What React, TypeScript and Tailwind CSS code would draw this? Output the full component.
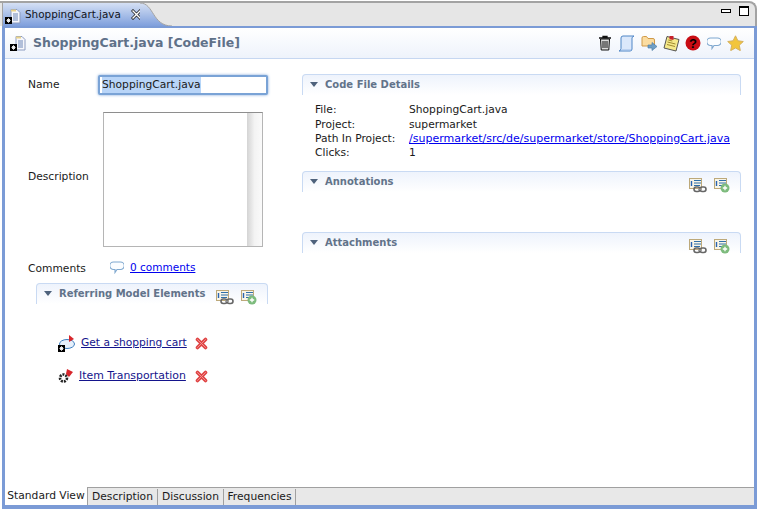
import type { ReactNode } from "react";

const font = { fontFamily: '"DejaVu Sans", sans-serif' };

function FileIcon() {
  return (
    <svg width="17" height="17" viewBox="0 0 17 17">
      <path d="M6 1.500h6l3 3v10.500h-9z" fill="#f7f7fb" stroke="#8c9cc0" />
      <path d="M8 6h5M8 8h5M8 10h5M8 12h5" stroke="#6d87b8" />
      <path d="M6 1.500h5v2h-5z" fill="#e9d28a" />
      <rect x="0" y="9" width="7" height="7" fill="#000" />
      <path d="M3.500 10.200v4.600M1.500 12.500h4M2 11l3 3M5 11l-3 3" stroke="#fff" strokeWidth="0.900" />
    </svg>
  );
}

function LinkListIcon() {
  return (
    <svg width="18" height="15" viewBox="0 0 18 15">
      <rect x="0.500" y="0.500" width="12" height="10" fill="#f8f5e8" stroke="#bda97a" />
      <path d="M2.500 3v5" stroke="#2a63b0" strokeWidth="1.400" />
      <path d="M5 2.500h7M5 5h7M5 7.500h6" stroke="#2f6fa8" />
      <rect x="5" y="9" width="6" height="4.500" rx="2.200" fill="none" stroke="#666" strokeWidth="1.600" />
      <rect x="11" y="9" width="6" height="4.500" rx="2.200" fill="none" stroke="#666" strokeWidth="1.600" />
      <path d="M9 11.200h4" stroke="#999" strokeWidth="1.400" />
    </svg>
  );
}

function AddListIcon() {
  return (
    <svg width="16" height="15" viewBox="0 0 16 15">
      <rect x="0.500" y="0.500" width="12" height="10" fill="#f8f5e8" stroke="#bda97a" />
      <path d="M2.500 3v5" stroke="#2a63b0" strokeWidth="1.400" />
      <path d="M5 2.500h7M5 5h7M5 7.500h4" stroke="#2f6fa8" />
      <circle cx="11" cy="10" r="4.500" fill="#7dbb7d" />
      <path d="M11 7.800v4.400M8.800 10h4.400" stroke="#fff" strokeWidth="1.300" />
    </svg>
  );
}

function DeleteIcon() {
  return (
    <svg width="13" height="13" viewBox="0 0 13 13">
      <path d="M2.500 2.500l8 8M10.500 2.500l-8 8" stroke="#e04444" strokeWidth="3.600" strokeLinecap="round" />
      <path d="M2.500 2.500l8 8M10.500 2.500l-8 8" stroke="#f08f8f" strokeWidth="1" strokeLinecap="round" />
    </svg>
  );
}

function CommentIcon() {
  return (
    <svg width="14" height="13" viewBox="0 0 14 13">
      <path d="M3.500 1h7a3 3 0 0 1 0 7.500h-3.500l-2 3v-3h-1.500a3 3 0 0 1 0-7.500z" fill="#fbfdff" stroke="#7fa8cf" strokeWidth="1.100" />
    </svg>
  );
}

function ToolbarIcons() {
  return (
    <div className="flex items-center gap-[5px]">
      <svg width="14" height="16" viewBox="0 0 14 16">
        <path d="M1 3h12M5 3V1.500h4V3" fill="none" stroke="#111" strokeWidth="1.300" />
        <path d="M2.500 4h9l-.7 11h-7.600z" fill="#ddd" stroke="#111" />
        <path d="M5 6v7M7 6v7M9 6v7" stroke="#111" />
      </svg>
      <svg width="17" height="17" viewBox="0 0 17 17" className="ml-[1px]">
        <path d="M5 1h11l-2 1.500v11.500q0 2-2 2H1q2-.5 2-2.500V3q0-2 2-2z" fill="#dbe8fb" stroke="#4f86c6" />
        <path d="M4 15h9" stroke="#9dbde6" />
      </svg>
      <svg width="17" height="16" viewBox="0 0 17 16" className="ml-[1px]">
        <path d="M1 3q0-1.500 1.500-1.500h3l1.500 2h5q1.500 0 1.500 1.500v6h-12.500z" fill="#fbdca0" stroke="#d09a48" />
        <path d="M7 10h4V7.500l5 4-5 4V13H7z" fill="#6f9fc6" stroke="#4f7ea8" strokeWidth="0.700" />
      </svg>
      <svg width="17" height="17" viewBox="0 0 17 17">
        <path d="M4 1.500l12 3-3 11.500-12-3z" fill="#f5e98a" stroke="#555" />
        <path d="M4.500 7l8 2M4 9.500l8 2M5.300 5l4 1" stroke="#a08a30" />
        <path d="M6.500 1h4v4l-4-.8z" fill="#c8202a" />
      </svg>
      <svg width="16" height="16" viewBox="0 0 16 16">
        <circle cx="8" cy="8" r="7.500" fill="#c80c14" />
        <text x="8" y="12.500" textAnchor="middle" fontSize="13" fontWeight="700" fill="#000" style={{ fontFamily: '"Liberation Sans", sans-serif' }}>?</text>
      </svg>
      <div className="ml-[1px] flex"><CommentIcon /></div>
      <svg width="17" height="16" viewBox="0 0 17 16" className="ml-[1px]">
        <path d="M8.500 .8l2.400 5 5.400.7-4 3.700 1 5.400-4.800-2.600-4.800 2.600 1-5.400-4-3.700 5.400-.7z" fill="#f2c53d" stroke="#d4b060" />
      </svg>
    </div>
  );
}

function SectionHeader({ title, actions }: { title: string; actions?: boolean }) {
  return (
    <div className="flex h-[21px] items-start rounded-t-[4px] border border-b-0 border-[#c9daf3] bg-gradient-to-b from-[#eef3fc] to-white pl-[7px] pr-[10px]">
      <svg width="8" height="5" viewBox="0 0 8 5" className="mt-[7px] shrink-0">
        <path d="M0 0h8l-4 5z" fill="#4e627c" />
      </svg>
      <span className="ml-[7px] mt-[3px] whitespace-nowrap text-[10px] font-bold leading-[14px] text-[#62738a]">{title}</span>
      {actions && (
        <div className="ml-auto mt-[6px] flex items-start gap-[7px]">
          <LinkListIcon />
          <AddListIcon />
        </div>
      )}
    </div>
  );
}

function DetailRow({ label, children }: { label: string; children: ReactNode }) {
  return (
    <div className="flex h-[14.400px] items-center">
      <span className="w-[94px] shrink-0">{label}</span>
      {children}
    </div>
  );
}

export default function App() {
  return (
    <div className="flex h-[509px] w-[758px] flex-col overflow-hidden bg-white text-[10.700px] text-[#1a1a1a]" style={font}>
      {/* tab strip */}
      <div className="mr-[1px] mt-[1px] flex h-[25px] shrink-0 rounded-tr-[8px] border-r-2 border-t-2 border-[#a3a3a3] bg-[#e6e6e6]">
        <div className="ml-[2px] flex w-[138px] shrink-0 items-center gap-[3px] border-l border-[#a3a3a3] bg-gradient-to-b from-[#d5e0f4] to-[#7f9fdc] pl-[2px]">
          <div className="mt-[3px] flex"><FileIcon /></div>
          <span className="text-[10.400px] text-[#10131a]">ShoppingCart.java</span>
          <svg width="11" height="11" viewBox="0 0 11 11" className="ml-[7px] shrink-0">
            <path d="M2 2l7 7M9 2l-7 7" stroke="#222" strokeWidth="3" strokeLinecap="square" />
            <path d="M2 2l7 7M9 2l-7 7" stroke="#fff" strokeWidth="1.400" strokeLinecap="square" />
          </svg>
        </div>
        <svg width="32" height="23" viewBox="0 0 32 23" className="shrink-0">
          <defs>
            <linearGradient id="tabCurve" x1="0" y1="0" x2="0" y2="1">
              <stop offset="0" stopColor="#d5e0f4" />
              <stop offset="1" stopColor="#7f9fdc" />
            </linearGradient>
          </defs>
          <path d="M0 0C14 0 12 23 32 23H0z" fill="url(#tabCurve)" />
          <path d="M0 0C14 0 12 23 32 23" fill="none" stroke="#a3a3a3" />
        </svg>
        <div className="ml-auto mr-[6px] mt-[3px] flex items-start gap-[8px]">
          <div className="mt-[3px] h-[4px] w-[10px] border border-black bg-white" />
          <div className="h-[10px] w-[10px] border border-t-2 border-black bg-white" />
        </div>
      </div>

      {/* editor frame */}
      <div className="ml-[2px] mr-[1px] flex min-h-0 flex-1 flex-col border-x-[3px] border-b-[4px] border-t-[2px] border-[#7b9bd6]">
        {/* form header */}
        <div className="flex h-[31px] shrink-0 items-center border-b border-[#c6d7f1] bg-gradient-to-b from-white to-[#eef3fb] pl-[5px] pr-[10px]">
          <FileIcon />
          <span className="ml-[6px] text-[12.500px] font-bold text-[#5f7189]">ShoppingCart.java [CodeFile]</span>
          <div className="ml-auto flex"><ToolbarIcons /></div>
        </div>

        {/* body */}
        <div className="flex min-h-0 flex-1">
          {/* left column */}
          <div className="w-[297px] shrink-0 pl-[23px] pt-[16px]">
            <div className="flex h-[20px] items-center">
              <span className="w-[70px]">Name</span>
              <div className="flex h-[20px] w-[170px] items-center rounded-[2px] border-2 border-[#7aa3d6] bg-white pl-[2px] shadow-[0_0_3px_#7aa3d6]">
                <span className="bg-[#b9d5f8] text-[#1a1a1a]">ShoppingCart.java</span>
              </div>
            </div>
            <div className="mt-[17px] flex h-[135px]">
              <span className="w-[75px] self-center pb-[4px]">Description</span>
              <div className="flex h-[135px] w-[160px] justify-end border border-[#b5b5b5] border-t-[#8e8e8e] bg-white">
                <div className="w-[15px] bg-gradient-to-r from-[#d4d4d4] via-[#f3f3f3] to-[#fafafa]" />
              </div>
            </div>
            <div className="mt-[14px] flex h-[16px] items-center">
              <span className="w-[82px]">Comments</span>
              <div className="mb-[3px] flex items-center gap-[6px]">
                <CommentIcon />
                <a className="text-[10.500px] text-[#0000ee] underline">0 comments</a>
              </div>
            </div>
            <div className="ml-[8px] mt-[6px] w-[232px]">
              <SectionHeader title="Referring Model Elements" actions />
            </div>
            <div className="ml-[30px] mt-[29px] flex h-[20px] items-center">
              <svg width="18" height="18" viewBox="0 0 18 18">
                <ellipse cx="9" cy="10" rx="7.500" ry="4.500" fill="#e6f0fb" stroke="#3f7fbf" />
                <path d="M11 1l5 4-5 3z" fill="#d7262c" />
                <rect x="0" y="11" width="7" height="7" fill="#000" />
                <path d="M3.500 12.200v4.600M1.500 14.500h4M2 13l3 3M5 13l-3 3" stroke="#fff" strokeWidth="0.900" />
              </svg>
              <a className="ml-[5px] text-[#14148c] underline">Get a shopping cart</a>
              <div className="ml-[8px] flex"><DeleteIcon /></div>
            </div>
            <div className="ml-[30px] mt-[13px] flex h-[20px] items-center">
              <svg width="16" height="16" viewBox="0 0 16 16">
                <circle cx="5.500" cy="10" r="3.500" fill="none" stroke="#222" strokeWidth="2.600" strokeDasharray="2 1" />
                <path d="M8 6l1-5 6 3-4 5z" fill="#d7262c" />
              </svg>
              <a className="ml-[5px] text-[10.900px] text-[#14148c] underline">Item Transportation</a>
              <div className="ml-[9px] flex"><DeleteIcon /></div>
            </div>
          </div>

          {/* right column */}
          <div className="w-[439px] shrink-0 pt-[15px]">
            <SectionHeader title="Code File Details" />
            <div className="pl-[13px] pt-[8px]">
              <DetailRow label="File:">ShoppingCart.java</DetailRow>
              <DetailRow label="Project:">supermarket</DetailRow>
              <DetailRow label="Path In Project:">
                <a className="whitespace-nowrap text-[11px] text-[#0000ee] underline">/supermarket/src/de/supermarket/store/ShoppingCart.java</a>
              </DetailRow>
              <DetailRow label="Clicks:">1</DetailRow>
            </div>
            <div className="mt-[10px]">
              <SectionHeader title="Annotations" actions />
            </div>
            <div className="mt-[40px]">
              <SectionHeader title="Attachments" actions />
            </div>
          </div>
        </div>

        {/* bottom tabs */}
        <div className="flex h-[18px] shrink-0 border-t border-[#a0a0a0] bg-[#e8e8e8] pt-[1px]">
          <div className="-mt-[2px] flex w-[83px] items-center justify-center border-r border-[#a0a0a0] bg-white pt-[1px]">Standard View</div>
          <div className="flex w-[70px] items-center justify-center border-r border-[#a0a0a0]">Description</div>
          <div className="flex w-[66px] items-center justify-center border-r border-[#a0a0a0]">Discussion</div>
          <div className="flex w-[72px] items-center justify-center border-r border-[#a0a0a0]">Frequencies</div>
        </div>
      </div>
    </div>
  );
}
